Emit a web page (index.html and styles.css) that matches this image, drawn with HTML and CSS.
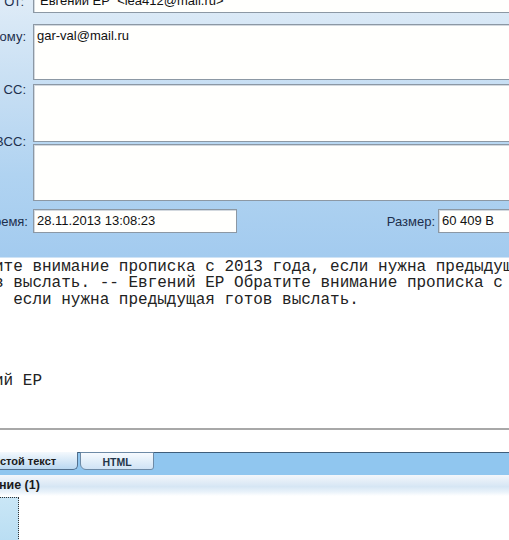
FILE: index.html
```html
<!DOCTYPE html>
<html lang="ru">
<head>
    <meta charset="UTF-8">
    <meta name="viewport" content="width=device-width, initial-scale=1.0">
    <title>Просмотр письма</title>
    <link rel="stylesheet" href="styles.css">
</head>
<body>
    <div class="window">
        <div class="headers">
            <div class="row row-from">
                <span class="lbl">От:</span>
                <div class="field">Евгений ЕР &nbsp;&lt;lea412@mail.ru&gt;</div>
            </div>
            <div class="row row-to">
                <span class="lbl">Кому:</span>
                <div class="field">gar-val@mail.ru</div>
            </div>
            <div class="row row-cc">
                <span class="lbl">CC:</span>
                <div class="field"></div>
            </div>
            <div class="row row-bcc">
                <span class="lbl">BCC:</span>
                <div class="field"></div>
            </div>
            <div class="row row-date">
                <span class="lbl">Время:</span>
                <div class="field field-date">28.11.2013 13:08:23</div>
                <div class="spacer"></div>
                <span class="lbl lbl-size">Размер:</span>
                <div class="field field-size">60 409 B</div>
            </div>
        </div>

        <div class="message">
<pre class="body-text">Обратите внимание прописка с 2013 года, если нужна предыдущая
 готов выслать. -- Евгений ЕР Обратите внимание прописка с 2013
 года, если нужна предыдущая готов выслать.



--
Евгений ЕР</pre>
        </div>

        <div class="tab-area"></div>
        <div class="tabs">
            <div class="tab tab-active">Простой текст</div>
            <div class="tab">HTML</div>
        </div>

        <div class="attach-head">Вложение (1)</div>
        <div class="attach-list">
            <div class="attach-item"></div>
        </div>
    </div>
</body>
</html>
```

FILE: styles.css
```css
html, body {
    margin: 0;
    height: 100%;
    overflow: hidden;
    background: #fff;
}
body {
    font-family: "Liberation Sans", Arial, sans-serif;
    font-size: 13px;
}
.window {
    width: 620px;
    margin: -16px 0 0 -60px;
}

/* header fields */
.headers {
    padding: 5px 0 24px;
    background: linear-gradient(to bottom, #e4eef8 0%, #d8e8f6 14%, #c4ddf3 42%, #b0d3f1 70%, #a3cbef 100%);
    border-bottom: 1px solid #cfe3f5;
}
.row {
    display: flex;
    align-items: flex-start;
}
.lbl {
    width: 93px;
    flex: none;
    box-sizing: border-box;
    padding-right: 7px;
    text-align: right;
    color: #1d2f4d;
    line-height: 15px;
    white-space: nowrap;
}
.field {
    flex: 1;
    box-sizing: border-box;
    background: #fffffd;
    border: 1px solid #8c98a4;
    box-shadow: inset 1px 1px 0 #d3d9df;
    padding: 3px 3px;
    line-height: 15px;
    color: #111;
    white-space: nowrap;
    overflow: hidden;
}
.row-from {
    align-items: center;
}
.row-from .lbl {
    padding-right: 9px;
}
.row-from .field {
    height: 24px;
    padding: 3px 6px;
}
.row-to {
    margin-top: 11px;
}
.row-to .lbl {
    margin-top: 5px;
}
.row-to .field {
    height: 56px;
}
.row-cc {
    margin-top: 4px;
}
.row-cc .lbl {
    margin-top: -2px;
}
.row-cc .field {
    height: 58px;
}
.row-bcc {
    margin-top: 2px;
}
.row-bcc .lbl {
    margin-top: -10px;
}
.row-bcc .field {
    height: 57px;
}
.row-date {
    margin-top: 8px;
    align-items: center;
}
.row-date .lbl {
    padding-right: 5px;
}
.row-date .field {
    height: 24px;
}
.field-date {
    flex: none;
    width: 204px;
}
.spacer {
    flex: 1;
}
.row-date .lbl-size {
    width: auto;
    padding-right: 0;
    margin-right: 3px;
}
.field-size {
    flex: none;
    width: 122px;
}

/* message text */
.message {
    height: 170px;
    border-bottom: 2px solid #a8a8a8;
    overflow: hidden;
}
.body-text {
    margin: 0;
    padding: 1px 0 0 6px;
    font-family: "Liberation Mono", "Courier New", monospace;
    font-size: 16px;
    line-height: 16.3px;
    color: #222;
}

/* view tabs */
.tab-area {
    height: 22px;
}
.tabs {
    display: flex;
    height: 22px;
    background: #90c6ef;
    border-top: 1px solid #3e5d7a;
}
.tab {
    box-sizing: border-box;
    margin-top: -1px;
    margin-left: 2px;
    width: 74px;
    height: 18px;
    padding-top: 2px;
    background: linear-gradient(to bottom, #f6fafe, #cfe3f5);
    border: 1px solid #6d8aa6;
    border-radius: 0 0 3px 6px;
    font-size: 10.5px;
    font-weight: bold;
    line-height: 14px;
    text-align: center;
    color: #24364a;
}
.tab-active {
    margin-left: 0;
    width: 138px;
    padding-left: 18px;
    border: none;
    border-right: 1px solid #52708e;
    border-bottom: 1px solid #52708e;
    border-radius: 0 0 5px 0;
    background: linear-gradient(to bottom, #f4f9fd, #bad8f1);
    font-size: 11px;
    color: #1a1a1a;
}

/* attachments */
.attach-head {
    height: 21px;
    padding-left: 19px;
    background: linear-gradient(to bottom, #f3f7fb 0%, #e6eff8 25%, #d6e6f4 55%, #e9f2fa 80%, #fff 100%);
    font-size: 12.5px;
    font-weight: bold;
    line-height: 21px;
    color: #1a1a1a;
}
.attach-list {
    padding-top: 1px;
}
.attach-item {
    margin-left: 20px;
    width: 59px;
    height: 60px;
    box-sizing: border-box;
    background: linear-gradient(to bottom, #c9e6f6, #b4dbf2);
    border-top: 1px dotted #333;
    border-right: 1px dotted #333;
}
```
